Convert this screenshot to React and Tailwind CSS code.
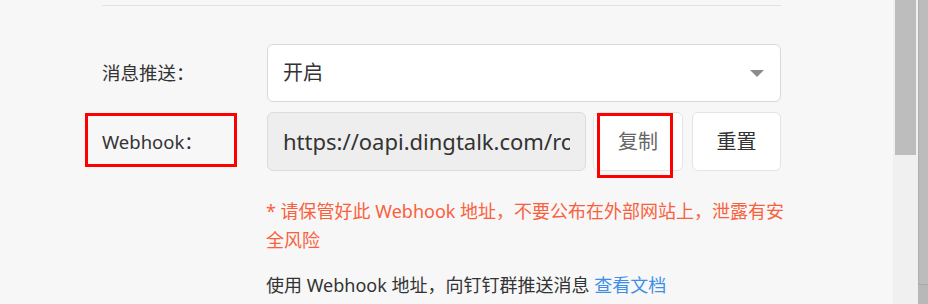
export default function App() {
  const font = { fontFamily: '"Noto Sans", "Noto Sans CJK SC", sans-serif' };

  return (
    <div className="flex h-[304px] w-[928px] overflow-hidden bg-[#f7f7f7] text-[#333]" style={font}>
      {/* content */}
      <div className="w-[893px]">
        <div className="ml-[102px] w-[679px]">
          <div className="mt-[5px] h-px bg-[#e2e2e2]" />

          {/* 消息推送 */}
          <div className="mt-[38px] flex h-[58px] items-center">
            <div className="w-[165px] text-[18.5px]">消息推送：</div>
            <div className="flex h-full flex-1 items-center justify-between rounded-[6px] border border-[#d9d9d9] bg-white pl-[15px] pr-[16px]">
              <span className="text-[20px]">开启</span>
              <span className="h-0 w-0 border-x-[7px] border-t-[7px] border-x-transparent border-t-[#8c8c8c]" />
            </div>
          </div>

          {/* Webhook */}
          <div className="mt-[10px] flex h-[59px] items-center">
            <div className="relative flex h-full w-[165px] items-center text-[18.5px]">
              Webhook：
              <span className="absolute left-[-17px] top-[1px] h-[54px] w-[152px] border-[3px] border-[#ff0000]" />
            </div>
            <div className="flex h-full w-[319px] items-center rounded-[6px] border border-[#dcdcdc] bg-[#eeeeee] px-[15px]">
              <span className="overflow-hidden whitespace-nowrap text-[22px]">
                https://oapi.dingtalk.com/robot/send?access_token=
              </span>
            </div>
            <div className="relative ml-[7px] flex h-full w-[90px] items-center justify-center rounded-[6px] border border-[#e4e4e4] bg-white text-[20px] text-[#666]">
              复制
              <span className="absolute left-[3px] top-0 h-[65px] w-[76px] border-[3px] border-[#ff0000]" />
            </div>
            <div className="ml-[9px] flex h-full w-[89px] items-center justify-center rounded-[6px] border border-[#e4e4e4] bg-white text-[20px]">
              重置
            </div>
          </div>

          {/* tips */}
          <div className="ml-[164px] mt-[26px] w-[522px] text-[18px] leading-[29px] text-[#f9613d]">
            * 请保管好此 Webhook 地址，不要公布在外部网站上，泄露有安全风险
          </div>
          <div className="ml-[164px] mt-[16px] text-[18px] leading-[29px]">
            使用 Webhook 地址，向钉钉群推送消息 <span className="text-[#3b8fe8]">查看文档</span>
          </div>
        </div>
      </div>

      {/* scrollbar */}
      <div className="w-[25px] bg-[#f0f0f0] px-[2px]">
        <div className="h-[155px] bg-[#bdbdbd]" />
      </div>
      <div className="flex w-[10px] flex-col bg-[#bcbcbc]">
        <div className="h-[284px] border-l border-[#b0b0b0]" />
        <div className="flex-1 border-t border-[#a8a8a8] bg-[#b8b8b8]" />
      </div>
    </div>
  );
}
